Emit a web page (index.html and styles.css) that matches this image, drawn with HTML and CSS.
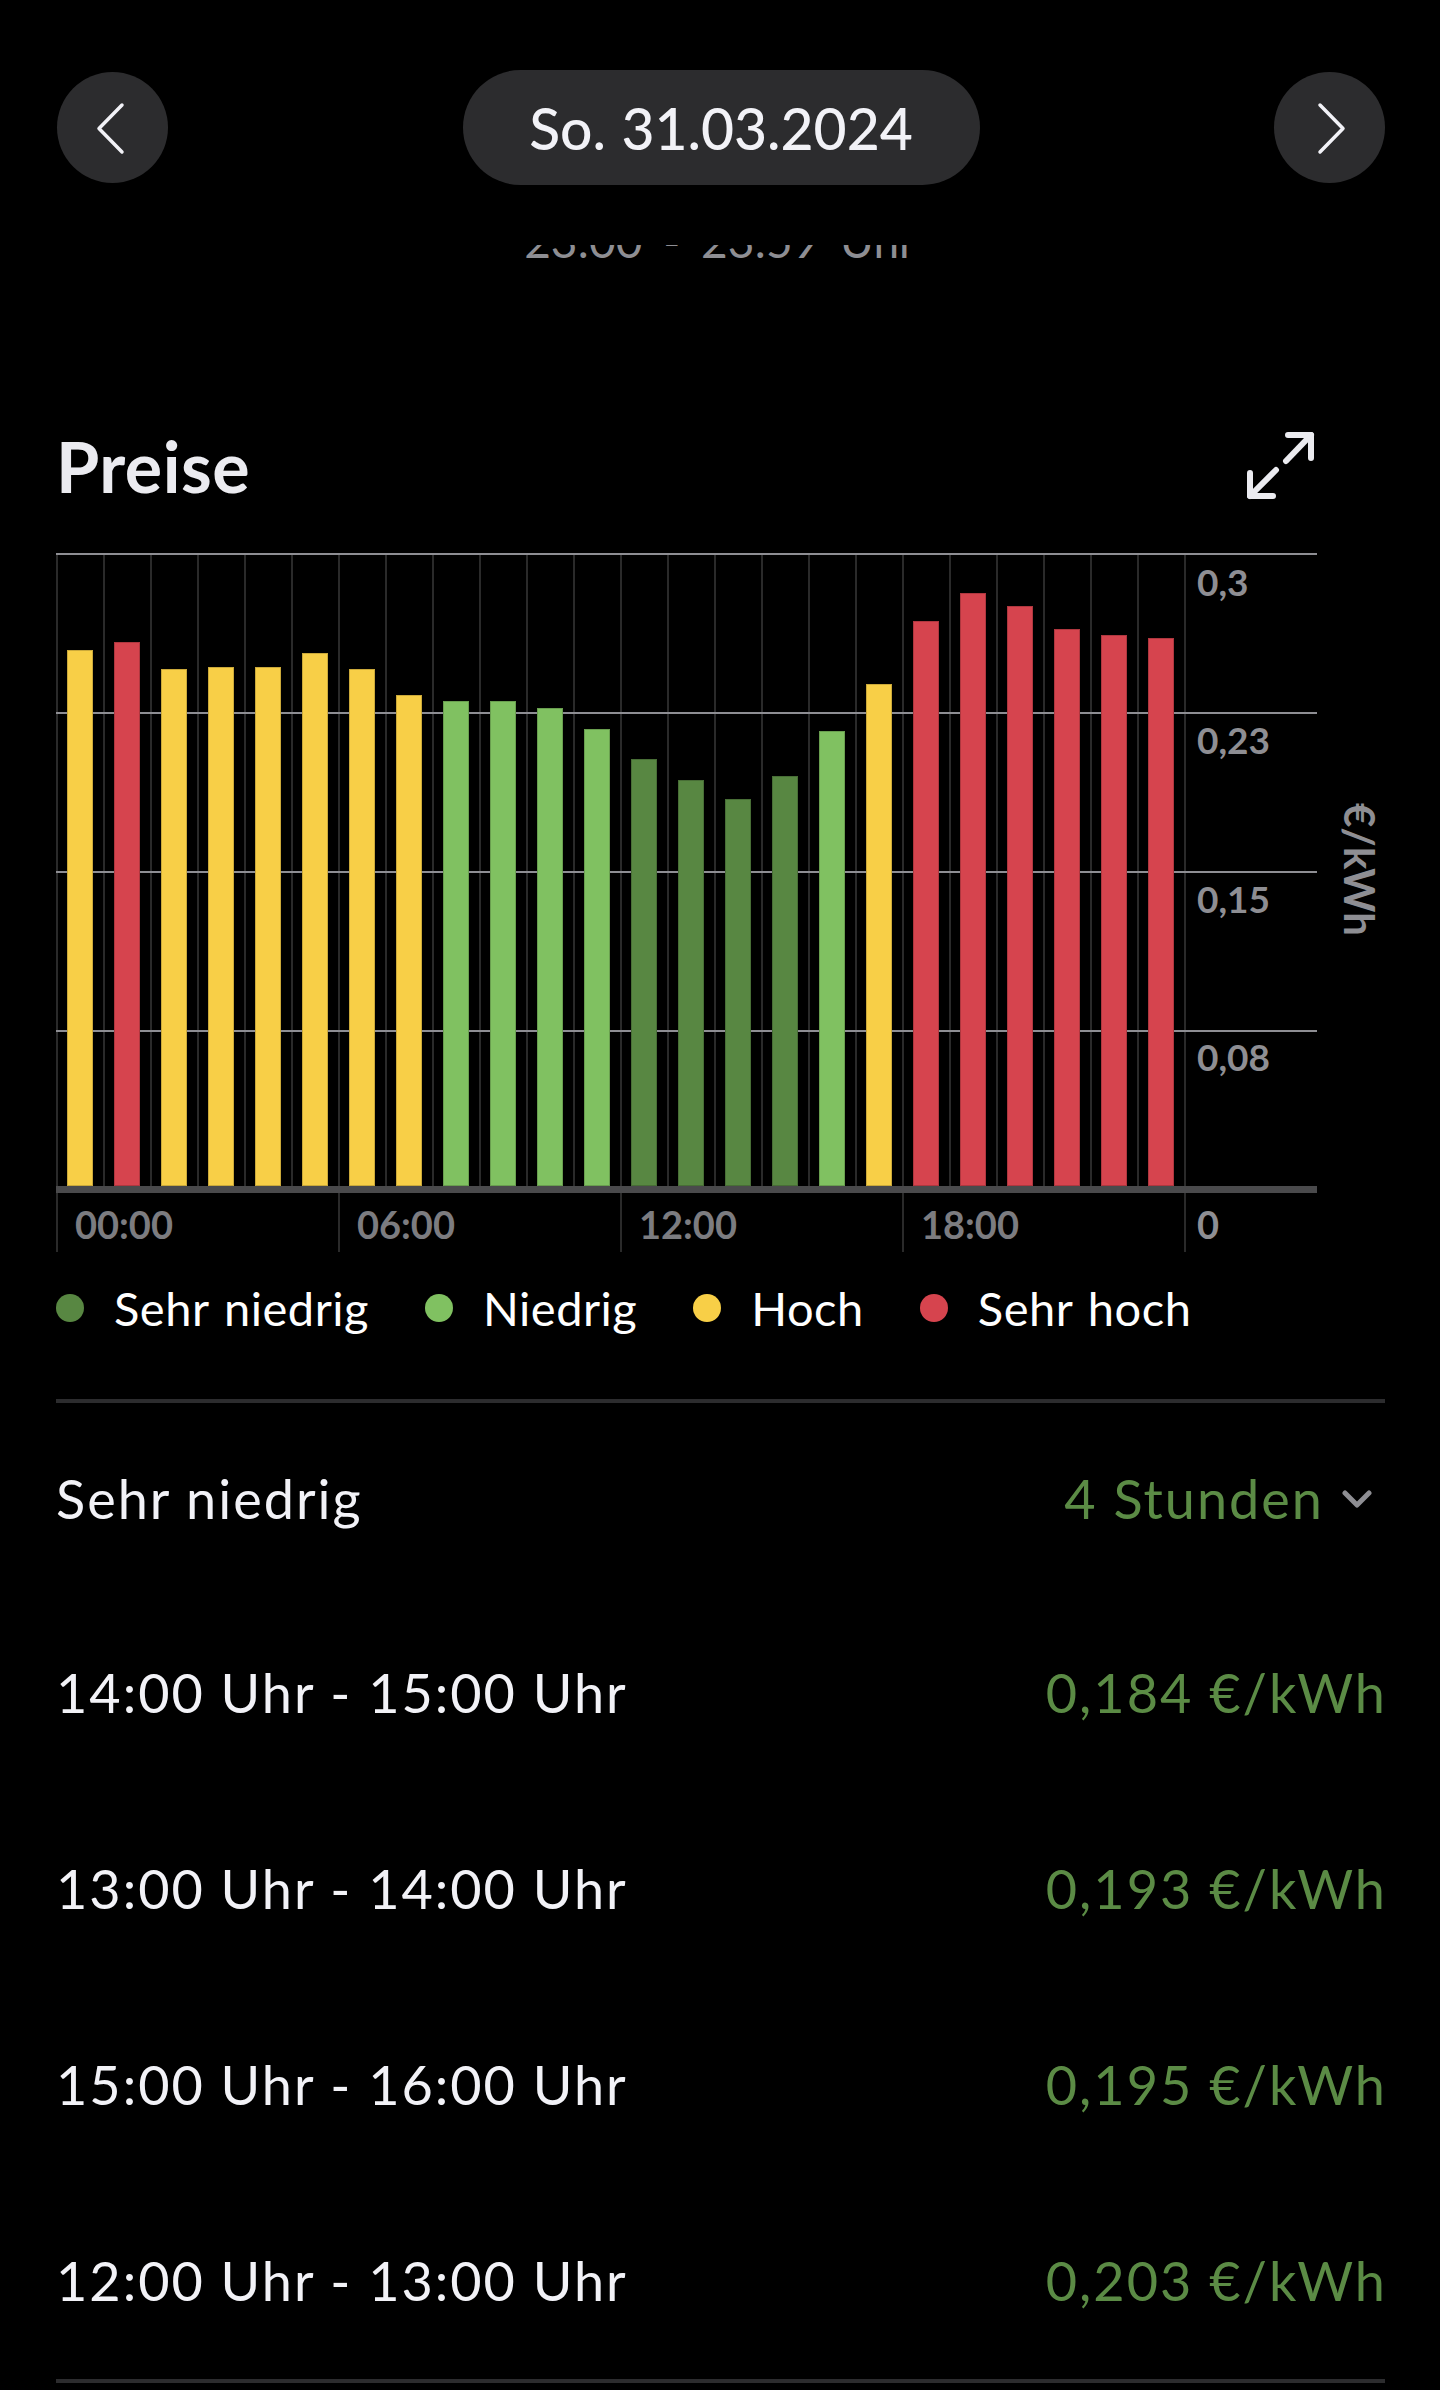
FILE: index.html
```html
<!DOCTYPE html>
<html lang="de">
<head>
    <meta charset="UTF-8">
    <title>Preise</title>
    <link rel="stylesheet" href="styles.css">
</head>
<body>
<div class="top">
    <div class="nav">
        <div class="round">
            <svg width="111" height="111" viewBox="0 0 111 111"><polyline points="65,33 42,56.5 65,80"/></svg>
        </div>
        <div class="date">So. 31.03.2024</div>
        <div class="round">
            <svg width="111" height="111" viewBox="0 0 111 111"><polyline points="46,33 69,56.5 46,80"/></svg>
        </div>
    </div>
</div>
<!-- vom Kopf verdeckter Rest der Liste darueber -->
<div class="peek"><span>23:00 - 23:59 Uhr</span></div>

<div class="page">
    <div class="title-row">
        <h2>Preise</h2>
        <svg class="expand" width="68" height="68" viewBox="0 0 68 68">
            <polyline points="41,3 64,3 64,26"/>
            <line x1="64" y1="3" x2="39" y2="29"/>
            <polyline points="3,41 3,64 26,64"/>
            <line x1="3" y1="64" x2="29" y2="38"/>
        </svg>
    </div>

    <div class="chart">
        <div class="plot-row">
            <div class="plot">
                <div class="slot"><div class="bar high" style="height:536px"></div></div>
                <div class="slot"><div class="bar vhigh" style="height:544px"></div></div>
                <div class="slot"><div class="bar high" style="height:517px"></div></div>
                <div class="slot"><div class="bar high" style="height:519px"></div></div>
                <div class="slot"><div class="bar high" style="height:519px"></div></div>
                <div class="slot"><div class="bar high" style="height:533px"></div></div>
                <div class="slot"><div class="bar high" style="height:517px"></div></div>
                <div class="slot"><div class="bar high" style="height:491px"></div></div>
                <div class="slot"><div class="bar low" style="height:485px"></div></div>
                <div class="slot"><div class="bar low" style="height:485px"></div></div>
                <div class="slot"><div class="bar low" style="height:478px"></div></div>
                <div class="slot"><div class="bar low" style="height:457px"></div></div>
                <div class="slot"><div class="bar vlow" style="height:427px"></div></div>
                <div class="slot"><div class="bar vlow" style="height:406px"></div></div>
                <div class="slot"><div class="bar vlow" style="height:387px"></div></div>
                <div class="slot"><div class="bar vlow" style="height:410px"></div></div>
                <div class="slot"><div class="bar low" style="height:455px"></div></div>
                <div class="slot"><div class="bar high" style="height:502px"></div></div>
                <div class="slot"><div class="bar vhigh" style="height:565px"></div></div>
                <div class="slot"><div class="bar vhigh" style="height:593px"></div></div>
                <div class="slot"><div class="bar vhigh" style="height:580px"></div></div>
                <div class="slot"><div class="bar vhigh" style="height:557px"></div></div>
                <div class="slot"><div class="bar vhigh" style="height:551px"></div></div>
                <div class="slot"><div class="bar vhigh" style="height:548px"></div></div>
            </div>
            <div class="yaxis">
                <span>0,3</span>
                <span>0,23</span>
                <span>0,15</span>
                <span>0,08</span>
            </div>
            <div class="unit"><span>€/kWh</span></div>
        </div>
        <div class="axis"></div>
        <div class="xaxis">
            <div class="tick">00:00</div>
            <div class="tick">06:00</div>
            <div class="tick">12:00</div>
            <div class="tick">18:00</div>
            <div class="tick last">0</div>
        </div>
    </div>

    <ul class="legend">
        <li><i class="dot vlow"></i>Sehr niedrig</li>
        <li><i class="dot low"></i>Niedrig</li>
        <li><i class="dot high"></i>Hoch</li>
        <li><i class="dot vhigh"></i>Sehr hoch</li>
    </ul>

    <div class="line"></div>

    <div class="list">
        <div class="row summary">
            <span>Sehr niedrig</span>
            <span class="price">4 Stunden
                <svg class="caret" width="30" height="20" viewBox="0 0 30 20"><polyline points="3,4 15,16 27,4"/></svg>
            </span>
        </div>
        <div class="row"><span>14:00 Uhr - 15:00 Uhr</span><span class="price">0,184 €/kWh</span></div>
        <div class="row"><span>13:00 Uhr - 14:00 Uhr</span><span class="price">0,193 €/kWh</span></div>
        <div class="row"><span>15:00 Uhr - 16:00 Uhr</span><span class="price">0,195 €/kWh</span></div>
        <div class="row"><span>12:00 Uhr - 13:00 Uhr</span><span class="price">0,203 €/kWh</span></div>
    </div>

    <div class="line"></div>
</div>
</body>
</html>
```

FILE: styles.css
```css
*{margin: 0; padding: 0; box-sizing: border-box;}
ul{list-style: none;}
body {
    background-color: #000;
    color: #f2f2f7;
    font-family: "Lato", "Noto Sans", sans-serif;
    width: 1440px;
    height: 2390px;
    overflow: hidden;
}

/* Kopf mit Datum */
.top {
    height: 245px;
    padding: 70px 55px 0 57px;
    background-color: #000;
}
.nav {
    height: 115px;
    display: flex;
    justify-content: space-between;
    align-items: center;
}
.round {
    width: 111px;
    height: 111px;
    border-radius: 50%;
    background-color: #2c2c2e;
}
.round svg {display: block;}
.round polyline {
    fill: none;
    stroke: #f2f2f7;
    stroke-width: 3.5;
    stroke-linecap: round;
    stroke-linejoin: round;
}
.date {
    width: 517px;
    height: 115px;
    border-radius: 58px;
    background-color: #2c2c2e;
    display: flex;
    justify-content: center;
    align-items: center;
    font-size: 57px;
    font-weight: 500;
    word-spacing: 1px;
}
.peek {
    height: 23px;
    overflow: hidden;
    display: flex;
    justify-content: center;
    align-items: flex-end;
}
.peek span {
    flex-shrink: 0;
    font-size: 46px;
    line-height: 55px;
    color: #8e8e93;
    word-spacing: 9px;
}

.page {
    padding: 0 55px 0 56px;
}

/* Titel */
.title-row {
    margin-top: 158px;
    height: 80px;
    padding-right: 70px;
    display: flex;
    justify-content: space-between;
    align-items: center;
}
.title-row h2 {
    font-size: 70px;
    line-height: 80px;
    font-weight: 700;
    letter-spacing: 0.5px;
    color: #ebebf0;
}
.expand {display: block;}
.expand polyline, .expand line {
    fill: none;
    stroke: #ebebf0;
    stroke-width: 6;
    stroke-linecap: round;
    stroke-linejoin: round;
}

/* Diagramm */
.chart {
    margin-top: 47px;
}
.plot-row {
    display: flex;
    height: 633px;
    background:
        repeating-linear-gradient(to bottom, #8e8e93 0 2px, transparent 2px 159px) 0 0 / 1261px 100% no-repeat,
        repeating-linear-gradient(to right, #2a2a2a 0 2px, transparent 2px 47px) 0 0 / 1130px 100% no-repeat;
}
.plot {
    width: 1130px;
    display: flex;
}
.slot {
    width: 47px;
    display: flex;
    justify-content: center;
    align-items: flex-end;
}
.bar {
    width: 26px;
    box-shadow: inset 0 0 0 1px rgba(0,0,0,0.18);
}
.vlow {background-color: #588742;}
.low {background-color: #80c161;}
.high {background-color: #f8cf47;}
.vhigh {background-color: #d6444e;}

.yaxis {
    width: 131px;
    display: flex;
    flex-direction: column;
}
.yaxis span {
    height: 159px;
    padding: 7px 0 0 11px;
    font-size: 37px;
    line-height: 44px;
    font-weight: 700;
    color: #8e8e93;
}
.unit {
    flex: 1;
    display: flex;
    align-items: center;
    padding-left: 22px;
}
.unit span {
    writing-mode: vertical-rl;
    white-space: nowrap;
    font-size: 42px;
    line-height: 42px;
    font-weight: 700;
    color: #8e8e93;
}
.axis {
    width: 1261px;
    height: 7px;
    background-color: #4a4a4c;
}
.xaxis {
    display: flex;
    height: 59px;
}
.tick {
    width: 282px;
    border-left: 2px solid #2a2a2a;
    padding: 9px 0 0 17px;
    font-size: 38px;
    line-height: 44px;
    font-weight: 700;
    color: #7c7c80;
}
.tick.last {
    width: auto;
    padding-left: 11px;
    color: #8e8e93;
}

/* Legende */
.legend {
    margin-top: 26px;
    height: 60px;
    display: flex;
    align-items: center;
    font-size: 47px;
    line-height: 60px;
    color: #fff;
}
.legend li {
    display: flex;
    align-items: center;
    margin-right: 56px;
    letter-spacing: 0.5px;
    word-spacing: 3px;
}
.dot {
    width: 28px;
    height: 28px;
    border-radius: 50%;
    margin-right: 30px;
}

.line {
    height: 4px;
    background-color: #2c2c2e;
}
.legend + .line {
    margin-top: 61px;
}

/* Liste */
.row {
    height: 196px;
    display: flex;
    justify-content: space-between;
    align-items: center;
    font-size: 54px;
    line-height: 62px;
    letter-spacing: 2px;
    color: #f2f2f7;
}
.row.summary {
    height: 192px;
    padding-right: 15px;
}
.price {
    color: #5b8b45;
    display: flex;
    align-items: center;
    margin-right: -2px;
}
.caret {
    margin-left: 18px;
    display: block;
}
.caret polyline {
    fill: none;
    stroke: #8e8e93;
    stroke-width: 5;
    stroke-linecap: round;
    stroke-linejoin: round;
}
```
